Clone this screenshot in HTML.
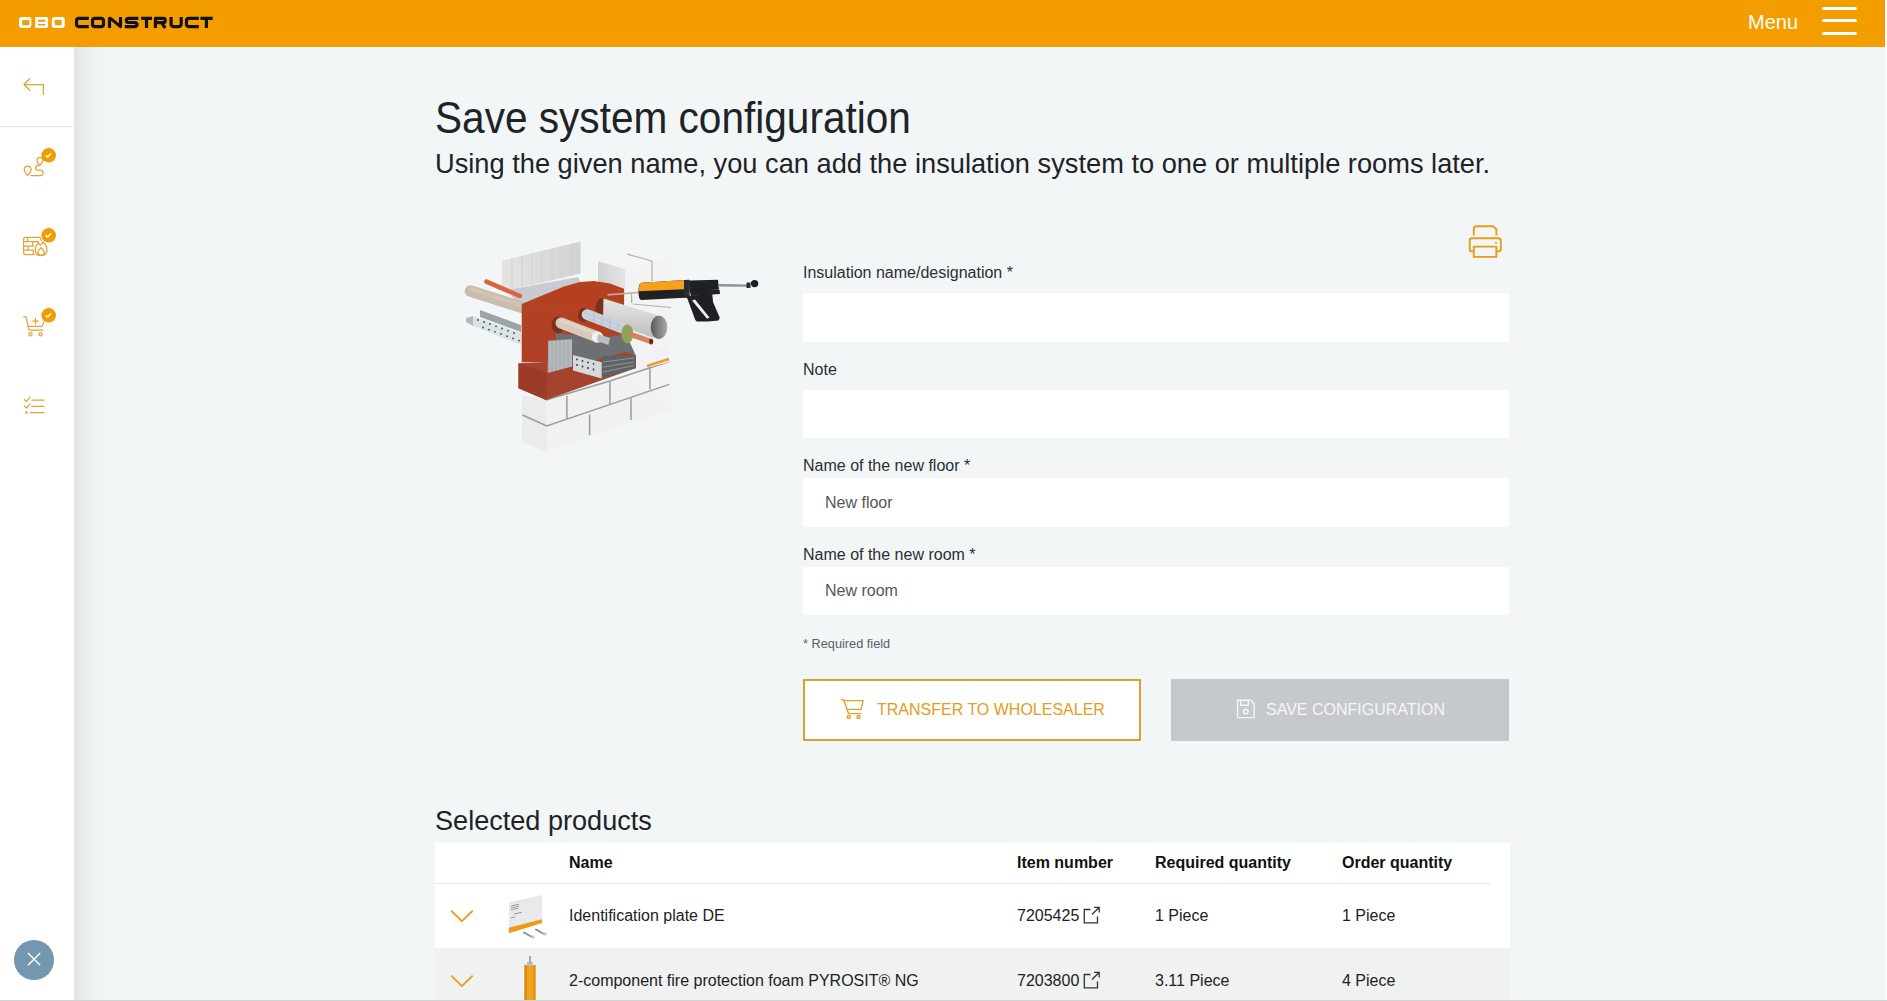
<!DOCTYPE html>
<html>
<head>
<meta charset="utf-8">
<style>
*{box-sizing:border-box;margin:0;padding:0}
html,body{width:1887px;height:1001px;overflow:hidden;background:#f3f6f7;font-family:"Liberation Sans",sans-serif;color:#1e2328}
.abs{position:absolute}
#hdr{position:absolute;left:0;top:0;width:1885px;height:47px;background:#f49d00}
#side{position:absolute;left:0;top:47px;width:74px;height:954px;background:#fff}
#shadow{position:absolute;left:74px;top:47px;width:40px;height:954px;background:linear-gradient(to right,rgba(0,0,0,0.075) 0,rgba(0,0,0,0.05) 6px,rgba(0,0,0,0.025) 16px,rgba(0,0,0,0.008) 28px,rgba(0,0,0,0) 40px)}
#rstrip{position:absolute;left:1885px;top:0;width:2px;height:1001px;background:linear-gradient(#fdfdf8 0,#fdfdf8 47px,#f8fbfc 47px)}
.txt{position:absolute;white-space:nowrap;line-height:1}
.inp{position:absolute;left:803px;width:706px;background:#fff}
.lbl{position:absolute;left:803px;font-size:16px;color:#2b2f33;white-space:nowrap;line-height:1}
</style>
</head>
<body>
<div id="hdr"></div>
<div id="side"></div>
<div id="shadow"></div>
<div id="rstrip"></div>

<!-- logo -->
<svg class="abs" style="left:0;top:0" width="230" height="47" viewBox="0 0 230 47">
<g fill="none" stroke-width="3.15" stroke-linejoin="round">
<g stroke="none" fill="#fff" fill-rule="evenodd">
<path d="M22 16.9H28.4Q31.4 16.9 31.4 19.9V25Q31.4 28 28.4 28H22Q19 28 19 25V19.9Q19 16.9 22 16.9ZM23.2 19.9Q22.2 19.9 22.2 20.9V24.3Q22.2 25.3 23.2 25.3H28.5Q29.5 25.3 29.5 24.3V20.9Q29.5 19.9 28.5 19.9Z"/>
<path d="M35.2 16.9H46Q48.2 16.9 48.2 19.1V20.8Q48.2 22.3 47.2 22.5Q48.2 22.8 48.2 24.3V25.8Q48.2 28 46 28H35.2ZM38 19.8V21.7H45.3V19.8ZM38 23.9V25.6H45.3V23.9Z"/>
<path d="M54.8 16.9H61.8Q64.8 16.9 64.8 19.9V25Q64.8 28 61.8 28H54.8Q51.8 28 51.8 25V19.9Q51.8 16.9 54.8 16.9ZM55.6 19.9Q54.6 19.9 54.6 20.9V24.3Q54.6 25.3 55.6 25.3H60.7Q61.7 25.3 61.7 24.3V20.9Q61.7 19.9 60.7 19.9Z"/>
</g>
<g stroke="#111">
<path d="M88.8 18.4H79Q76.5 18.4 76.5 20.9V24.1Q76.5 26.6 79 26.6H88.8"/>
<rect x="92.5" y="18.4" width="11" height="8.2" rx="2.4"/>
<path d="M109.5 28V18.4H110.5L120.5 26.6H120.5V17"/>
<path d="M138.4 18.4H128.8Q126.3 18.4 126.3 20.4Q126.3 22.5 128.8 22.5H134.5Q137 22.5 137 24.5Q137 26.6 134.5 26.6H124.8"/>
<path d="M141.1 18.4H152M146.5 18.4V28"/>
<path d="M155.4 28V18.4H163.5Q165.2 18.4 165.2 20.2V20.8Q165.2 22.6 163.5 22.6H155.4M161.5 22.6L165.2 28"/>
<path d="M171.1 17V24.1Q171.1 26.6 173.6 26.6H178.7Q181.2 26.6 181.2 24.1V17"/>
<path d="M198.8 18.4H189Q186.4 18.4 186.4 20.9V24.1Q186.4 26.6 189 26.6H198.8"/>
<path d="M200.4 18.4H212.7M206.4 18.4V28"/>
</g>
</g>
</svg>
<div class="txt" style="left:1748px;top:12px;font-size:20px;color:#fff">Menu</div>
<div class="abs" style="left:1822px;top:6.8px;width:35px;height:2.9px;border-radius:1.5px;background:#fff"></div>
<div class="abs" style="left:1822px;top:19.2px;width:35px;height:2.9px;border-radius:1.5px;background:#fff"></div>
<div class="abs" style="left:1822px;top:31.8px;width:35px;height:2.9px;border-radius:1.5px;background:#fff"></div>

<!-- sidebar icons -->
<svg class="abs" style="left:0;top:47px" width="74" height="954" viewBox="0 47 74 954">
<g fill="none" stroke="#e3a23c" stroke-width="1.25" stroke-linecap="round" stroke-linejoin="round">
<path d="M29.8 78.8L24 84.5L29.8 90.2M24 84.5H43.4V94.4"/>
<!-- route -->
<path d="M27.7 175.5Q24.3 171.8 24.3 169.5A3.4 3.4 0 0 1 31.1 169.5Q31.1 171.8 27.7 175.5Z"/>
<path d="M39.9 165.4Q37 162.2 37 160.2A2.9 2.9 0 0 1 42.8 160.2Q42.8 162.2 39.9 165.4Z"/>
<path d="M39.2 165.6H37.8Q35.6 165.6 35.6 167.9Q35.6 170.1 37.8 170.1H41Q43 170.1 43 172.7Q43 175.5 41 175.5H30.8"/>
<!-- wall fire -->
<path d="M40 237.3H25.6Q23.6 237.3 23.6 239.3V252.6Q23.6 254.6 25.6 254.6H34.2M23.6 241.6H38.5M23.6 246H33.3M23.6 250.2H33.3M27.6 237.3V241.6M32.8 241.6V246M28.1 246V250.2M33.3 250.2V254.6M40 237.3L41.3 240.4"/>
<path d="M40.6 255.7Q35.3 255.7 35.3 250Q35.3 246 38.3 242.4Q39.2 245.4 40.6 244.8Q42.2 244.3 42.8 242Q46.9 245.6 46.9 250Q46.9 255.7 40.6 255.7Z"/>
<path d="M41 255.3Q37.9 255.3 37.9 252.3Q37.9 250.2 41 247.7Q44.2 250.2 44.2 252.3Q44.2 255.3 41 255.3Z"/>
<!-- cart -->
<path d="M23.7 316.6H25Q26.2 316.6 26.5 318.3L28.4 328.2Q28.8 330.2 30.6 330.2H43M28.3 326.3H41.3Q42.5 326.3 42.8 324.8L43.6 322"/>
<circle cx="30.5" cy="334.2" r="1.6"/><circle cx="40.5" cy="334.2" r="1.6"/>
<path d="M35.5 318.3V324M32.7 321.1H38.3"/>
<!-- checklist -->
<path d="M24.3 399.5L26.5 401.6L29.8 397.3M24.3 406L26.5 408.1L29.8 403.8M31.8 400.1H44M31.8 406.3H44M30.6 412.5H44"/>
</g>
<circle cx="26.3" cy="412.5" r="1.3" fill="#e3a23c"/>
<g fill="#f39c00"><circle cx="48.7" cy="155.3" r="7.3"/><circle cx="48.7" cy="235.3" r="7.3"/><circle cx="48.7" cy="315.3" r="7.3"/></g>
<g fill="none" stroke="#fff" stroke-width="1.4" stroke-linecap="round" stroke-linejoin="round">
<path d="M46 155.6L47.6 157L50.8 153.8"/><path d="M46 235.6L47.6 237L50.8 233.8"/><path d="M46 315.6L47.6 317L50.8 313.8"/>
</g>
<circle cx="34" cy="960" r="20" fill="#7297ae"/>
<path d="M28 953L40.2 965.2M40.2 953L28 965.2" stroke="#fff" stroke-width="1.4" fill="none"/>
</svg>
<!-- sidebar divider -->
<div class="abs" style="left:0;top:126px;width:74px;height:1px;background:#e2e4e6"></div>

<!-- title -->
<div class="txt" style="left:435px;top:96px;font-size:40.6px;transform-origin:0 0;transform:scaleY(1.1)">Save system configuration</div>
<div class="txt" style="left:435px;top:148.6px;font-size:27.24px;transform-origin:0 0;transform:scaleY(1.045)">Using the given name, you can add the insulation system to one or multiple rooms later.</div>

<!-- illustration -->
<svg class="abs" style="left:440px;top:225px" width="340" height="235" viewBox="440 225 340 235">
<defs>
<linearGradient id="gPanel" x1="0" y1="0" x2="1" y2="0"><stop offset="0" stop-color="#e4e4e4"/><stop offset="1" stop-color="#d2d2d2"/></linearGradient>
<linearGradient id="gBeige" x1="0" y1="0" x2="0" y2="1"><stop offset="0" stop-color="#d9cfc2"/><stop offset="1" stop-color="#bfb09c"/></linearGradient>
<linearGradient id="gRed" x1="0" y1="0" x2="0" y2="1"><stop offset="0" stop-color="#b5401f"/><stop offset="1" stop-color="#ad4129"/></linearGradient>
<linearGradient id="gPipe" x1="0" y1="0" x2="0" y2="1"><stop offset="0" stop-color="#e6e6e6"/><stop offset="1" stop-color="#bdbdbd"/></linearGradient>
<linearGradient id="gHole" x1="0" y1="0" x2="1" y2="0"><stop offset="0" stop-color="#5a5a5a"/><stop offset="1" stop-color="#a8a8a8"/></linearGradient>
<linearGradient id="gBlockL" x1="0" y1="0" x2="1" y2="0"><stop offset="0" stop-color="#d2d2d3"/><stop offset="1" stop-color="#e4e4e5"/></linearGradient>
</defs>
<!-- lower white wall -->
<polygon points="522,395 546,400 669,361 670,410 547,452 522,442" fill="#f1f1f1"/>
<polygon points="522,395 546,400 547,452 522,442" fill="#ebebeb"/>
<!-- white column -->
<polygon points="598,261 627,254 671,258 671,410 624,372 598,300" fill="#f3f3f3"/>
<polygon points="598,261 625,269 625,305 598,300" fill="url(#gBlockL)"/>
<polygon points="598,261 627,254 671,257 625,269" fill="#f5f5f5"/>
<g stroke="#999c9e" stroke-width="1.5" fill="none">
<path d="M627.3 254.2L652 261M652 261V281M631.6 294V303M632.7 304L671 307.5" stroke="#aeb1b3" stroke-width="1.2"/>
<path d="M546 400L609.9 381L650 367.7L669.5 361.5M522.5 415L546.8 426L669.2 384.4M566.9 396V419.6M609.9 382V403.7M649.9 366.9V389.4M589.6 414.4V435.2M631 398.3V420"/>
</g>
<!-- back panel -->
<polygon points="502,260.6 580.5,241.4 580.5,273.5 502,292" fill="url(#gPanel)"/>
<g stroke="#c9c9c9" stroke-width="0.6"><path d="M512 258V290M522 256V288M532 253.5V286M542 251V284M552 248.6V281M562 246V279M572 243.6V276"/></g>
<!-- silver pipe behind -->
<polygon points="508,290 578,277 586,293 518,306" fill="#c8ccd0"/>
<!-- beige tube left -->
<line x1="470.5" y1="291" x2="530" y2="310" stroke="#c9bcab" stroke-width="11.5" stroke-linecap="round"/>
<line x1="471" y1="289" x2="530" y2="308" stroke="#d3c8b9" stroke-width="4" stroke-linecap="round" opacity="0.7"/>
<!-- orange pipe -->
<line x1="486.4" y1="281.6" x2="520" y2="296" stroke="#d9653c" stroke-width="4.5" stroke-linecap="round"/>
<!-- left cable tray -->
<polygon points="480,310 521,325 521,332 480,317" fill="#9ea3a6"/>
<polygon points="466,318 473,316 473,326 466,322" fill="#b3b8bb"/>
<polygon points="473,316 521,333 521,345 473,326" fill="#dbe3e8"/>
<g fill="#3a4a55"><circle cx="478" cy="320" r="0.9"/><circle cx="484" cy="322" r="0.9"/><circle cx="490" cy="324" r="0.9"/><circle cx="496" cy="326.3" r="0.9"/><circle cx="502" cy="328.5" r="0.9"/><circle cx="508" cy="330.7" r="0.9"/><circle cx="514" cy="333" r="0.9"/>
<circle cx="483" cy="327.5" r="0.9"/><circle cx="489" cy="329.7" r="0.9"/><circle cx="495" cy="331.8" r="0.9"/><circle cx="501" cy="334" r="0.9"/><circle cx="507" cy="336.2" r="0.9"/><circle cx="513" cy="338.4" r="0.9"/><circle cx="519" cy="340.6" r="0.9"/></g>
<!-- red frame -->
<polygon points="521.7,304 544,294.7 564,286.4 580,282 594,281 610,283.5 624,288.8 624,352 548,373 547.8,362.3 521.7,362.3" fill="url(#gRed)"/>
<!-- opening interior -->
<polygon points="556,333 600,338 626,334 636,356 636,368 601.7,378.5 573,370 556,372" fill="#6d7073"/>
<polygon points="548.2,340.7 572,339.3 572,371 548.2,374" fill="#b4b9bd"/>
<g stroke="#9aa0a4" stroke-width="0.7"><path d="M552 340.5V373.5M556 340.2V373M560 340V372.6M564 339.8V372.2M568 339.5V371.6"/></g>
<!-- sill -->
<polygon points="518.5,363.2 547.8,362 547.8,373 626,352 636,356 636,368 546,400 518.5,388.3" fill="#a4442e"/>
<polygon points="518.5,363.2 547.8,373 546,400 518.5,388.3" fill="#9c3c28"/>
<!-- inner cable tray -->
<polygon points="601.7,356 636,356 636,368 601.7,378.5" fill="#5e6264"/>
<polygon points="573,355 601.7,362.3 601.7,378.5 573,370.4" fill="#d7dadc"/>
<g stroke="#8e9396" stroke-width="1.2"><path d="M603 362L634 358M603 367L634 362M603 372L634 365.5"/></g>
<g fill="#333"><circle cx="577" cy="359.5" r="0.9"/><circle cx="582.5" cy="361" r="0.9"/><circle cx="588" cy="362.4" r="0.9"/><circle cx="593.5" cy="363.8" r="0.9"/><circle cx="577" cy="365" r="0.9"/><circle cx="582.5" cy="366.5" r="0.9"/><circle cx="588" cy="368" r="0.9"/><circle cx="593.5" cy="369.5" r="0.9"/></g>
<!-- big gray pipe -->
<ellipse cx="602" cy="309" rx="6.5" ry="11" fill="#7e2f1c"/>
<polygon points="603.5,298.5 659,315.7 659,338.8 651.4,337.2 603,319.5" fill="url(#gPipe)"/>
<ellipse cx="659" cy="327.3" rx="8.3" ry="11.6" fill="url(#gHole)"/>
<!-- silver insulated pipe -->
<ellipse cx="583" cy="315" rx="5" ry="7" fill="#7e2f1c"/>
<line x1="587" y1="314.5" x2="626" y2="329.5" stroke="#c9d3dd" stroke-width="10.5" stroke-linecap="round"/>
<g stroke="#a8b4c2" stroke-width="0.6"><path d="M594 312V322M602 315V325M610 318V328M618 321V331"/><path d="M585 313L626 328M585 317L626 332" stroke="#b7c1cc"/></g>
<!-- beige tube lower -->
<ellipse cx="558" cy="325" rx="6.5" ry="8.5" fill="#7e2f1c"/>
<line x1="561" y1="323" x2="597.5" y2="337" stroke="#d6cbbb" stroke-width="11" stroke-linecap="round"/>
<line x1="561" y1="320.5" x2="597.5" y2="334.5" stroke="#e2d9cc" stroke-width="3" stroke-linecap="round" opacity="0.8"/>
<circle cx="597.5" cy="337" r="5.6" fill="#f2f2f2"/>
<polygon points="598,334 610,338 608.5,345 597,341" fill="#b9bec2"/>
<!-- green ring & copper -->
<ellipse cx="627.3" cy="333.9" rx="6" ry="9.3" fill="#8ea356"/>
<line x1="629.5" y1="334" x2="651" y2="341.5" stroke="#d2835f" stroke-width="5.3"/>
<ellipse cx="651.2" cy="341.6" rx="2" ry="2.8" fill="#7a1f12"/>
<!-- label sticker -->
<polygon points="650,352 668,346 669,362 650,367" fill="#eef2f6"/>
<line x1="647" y1="366" x2="669" y2="359" stroke="#f19a30" stroke-width="2.5"/>
<!-- gun -->
<line x1="607.5" y1="294.9" x2="641" y2="292.3" stroke="#b8b0a4" stroke-width="1.6"/>
<path d="M641.5 282.8L689 279.8L689.5 297.6L641.5 300Q638.5 300 638.5 291.4Q638.5 282.8 641.5 282.8Z" fill="#1f2124"/>
<path d="M641.5 282.8L689 279.8L689 289L638.8 291.3Q638.8 282.8 641.5 282.8Z" fill="#f6a11c"/>
<rect x="684" y="280" width="5.5" height="17.6" fill="#2a2c30"/>
<polygon points="689,280.5 718,279.8 719,289.5 689.5,291" fill="#1e2023"/>
<polygon points="689.5,290 719.5,289.5 720,294 691,296" fill="#1e2023"/>
<polygon points="686.4,296 712.3,293.9 713,302 719.8,317.7 718.5,320.5 707.9,321.4 696.8,321.4 695.3,319.9" fill="#1e2023"/>
<polygon points="692,300.5 695,299.5 709.5,317.5 707,318.7" fill="#eef1f2"/>
<line x1="718" y1="285.2" x2="747.5" y2="285.6" stroke="#8c8f92" stroke-width="2.4"/>
<circle cx="754.6" cy="283.6" r="3.7" fill="#1d1f22"/>
<rect x="746.5" y="282.5" width="4" height="5.5" fill="#2a2c2f"/>
</svg>
<!-- form -->
<div class="lbl" style="top:265px">Insulation name/designation *</div>
<div class="inp" style="top:293px;height:49px"></div>
<div class="lbl" style="top:362px">Note</div>
<div class="inp" style="top:390px;height:48px"></div>
<div class="lbl" style="top:458px">Name of the new floor *</div>
<div class="inp" style="top:478px;height:49px"></div>
<div class="txt" style="left:825px;top:495px;font-size:16px;color:#555">New floor</div>
<div class="lbl" style="top:547px">Name of the new room *</div>
<div class="inp" style="top:567px;height:48px"></div>
<div class="txt" style="left:825px;top:583px;font-size:16px;color:#555">New room</div>
<div class="txt" style="left:803px;top:637.8px;font-size:12.75px;color:#5c6064">* Required field</div>

<!-- buttons -->
<div class="abs" style="left:803px;top:679px;width:338px;height:62px;border:2px solid #d9a038;background:#fff"></div>
<div class="txt" style="left:877px;top:702px;font-size:16px;color:#e39c22">TRANSFER TO WHOLESALER</div>
<div class="abs" style="left:1171px;top:679px;width:338px;height:62px;background:#c5c9cc"></div>
<div class="txt" style="left:1266px;top:702px;font-size:16px;color:#f4f6f7">SAVE CONFIGURATION</div>

<!-- printer -->
<svg class="abs" style="left:1460px;top:218px" width="50" height="46" viewBox="1460 218 50 46">
<g fill="none" stroke="#e89c1a" stroke-width="1.9" stroke-linejoin="round">
<path d="M1473.8 235.5V229Q1473.8 226.3 1476.5 226.3H1493.3L1496.4 229.4V235.5"/>
<path d="M1473.6 251.4H1472Q1469.7 251.4 1469.7 249V240.8Q1469.7 238.3 1472.2 238.3H1498.3Q1500.8 238.3 1500.8 240.8V249Q1500.8 251.4 1498.5 251.4H1496.6"/>
<rect x="1473.8" y="246.6" width="22.6" height="10.3"/>
</g>
<circle cx="1496" cy="242.8" r="1.1" fill="#e89c1a"/>
</svg>
<!-- button icons -->
<svg class="abs" style="left:835px;top:690px" width="40" height="36" viewBox="835 690 40 36">
<g fill="none" stroke="#e3a02a" stroke-width="1.4" stroke-linejoin="round" stroke-linecap="round">
<path d="M841.7 699.7H843.6L848.6 713.6H860.6"/>
<path d="M844.4 700.6H863.1L861 709.4H847.5"/>
<circle cx="848.8" cy="717" r="1.5"/><circle cx="858.5" cy="717" r="1.5"/>
</g>
</svg>
<svg class="abs" style="left:1230px;top:692px" width="32" height="34" viewBox="1230 692 32 34">
<g fill="none" stroke="#f4f6f7" stroke-width="1.4" stroke-linejoin="round">
<path d="M1237.6 700.3H1250.8L1254.2 703.7V717.6H1237.6Z"/>
<path d="M1240.8 700.3V705.3H1248.3V700.3"/>
<circle cx="1245.8" cy="711.5" r="2.3"/>
</g>
</svg>
<!-- products -->
<div class="txt" style="left:435px;top:805.6px;font-size:27.1px;transform-origin:0 0;transform:scaleY(1.03)">Selected products</div>
<div class="abs" style="left:435px;top:843px;width:1075px;height:105px;background:#fff"></div>
<div class="abs" style="left:435px;top:948px;width:1075px;height:53px;background:#f0f1f1"></div>
<div class="abs" style="left:435px;top:883px;width:1055px;height:1px;background:#e6e8ea"></div>
<div class="txt" style="left:569px;top:855px;font-size:16px;font-weight:700;color:#111">Name</div>
<div class="txt" style="left:1017px;top:855px;font-size:16px;font-weight:700;color:#111">Item number</div>
<div class="txt" style="left:1155px;top:855px;font-size:16px;font-weight:700;color:#111">Required quantity</div>
<div class="txt" style="left:1342px;top:855px;font-size:16px;font-weight:700;color:#111">Order quantity</div>
<div class="txt" style="left:569px;top:908px;font-size:16px;color:#222">Identification plate DE</div>
<div class="txt" style="left:1017px;top:908px;font-size:16px;color:#222">7205425</div>
<div class="txt" style="left:1155px;top:908px;font-size:16px;color:#222">1 Piece</div>
<div class="txt" style="left:1342px;top:908px;font-size:16px;color:#222">1 Piece</div>
<div class="txt" style="left:569px;top:973px;font-size:16px;color:#222">2-component fire protection foam PYROSIT® NG</div>
<div class="txt" style="left:1017px;top:973px;font-size:16px;color:#222">7203800</div>
<div class="txt" style="left:1155px;top:973px;font-size:16px;color:#222">3.11 Piece</div>
<div class="txt" style="left:1342px;top:973px;font-size:16px;color:#222">4 Piece</div>

<!-- table icons -->
<svg class="abs" style="left:435px;top:884px" width="140" height="117" viewBox="435 884 140 117">
<g fill="none" stroke="#eea025" stroke-width="2" stroke-linejoin="miter">
<path d="M451.3 910.8L461.9 921.1L472.7 910.8"/>
<path d="M451.3 975.6L461.9 986.2L472.7 975.6"/>
</g>
<polygon points="508.8,902.4 542,895.1 542,922.9 508.8,933.2" fill="#e8e9ea"/>
<polygon points="508.8,927.8 542,919.3 542,922.9 508.8,933.2" fill="#f19a12"/>
<g stroke="#888" stroke-width="0.8"><path d="M511 906L519 904.3M511 908L519 906.3M511 910L518 908.4M514 914L522 912.2M511 918L515 917"/></g>
<g stroke="#8d8f90" stroke-width="2" stroke-linecap="round"><path d="M524 932.5L532 937M536 929.5L544 934"/></g>
<g fill="#c9cccd"><circle cx="533" cy="937" r="1.8"/><circle cx="545" cy="934" r="1.8"/></g>
<rect x="524.5" y="965" width="11" height="36" fill="#f0a21e"/>
<rect x="524.5" y="965" width="2.5" height="36" fill="#d98c10"/>
<rect x="533" y="965" width="2.5" height="36" fill="#e09515"/>
<rect x="527" y="962" width="6" height="4" fill="#b9bcc0"/>
<rect x="529" y="956" width="2" height="7" fill="#a7abaf"/>
</svg>
<svg class="abs" style="left:1080px;top:900px" width="30" height="95" viewBox="1080 900 30 95">
<g fill="none" stroke="#333" stroke-width="1.3">
<path d="M1090.5 909.5H1084.3V922.8H1097.5V916.5"/><path d="M1092 914.5L1099 907.5M1094 907.3H1099.2V912.5"/>
<path d="M1090.5 974.5H1084.3V987.8H1097.5V981.5"/><path d="M1092 979.5L1099 972.5M1094 972.3H1099.2V977.5"/>
</g>
</svg>
<div class="abs" style="left:0;top:1000px;width:1887px;height:1px;background:#d0d2d4"></div>
</body>
</html>
